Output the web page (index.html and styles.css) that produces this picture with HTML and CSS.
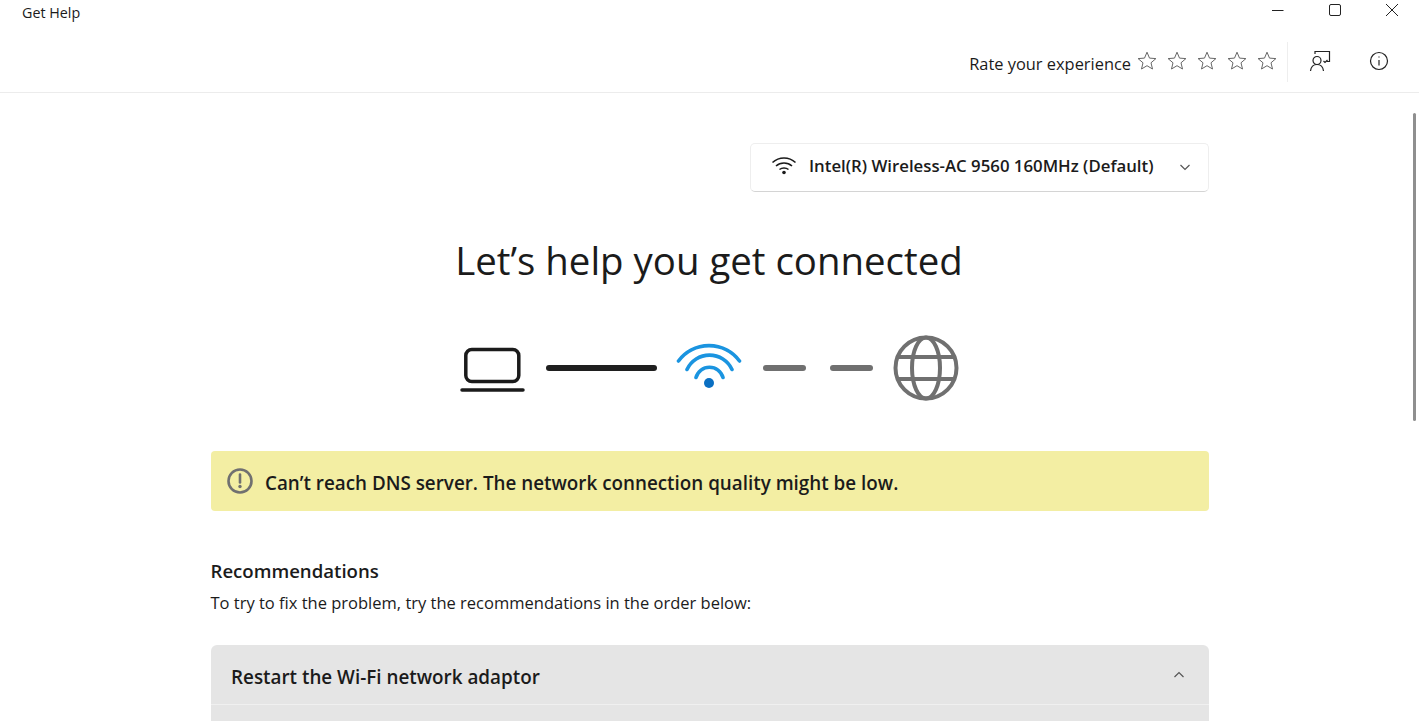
FILE: index.html
```html
<!DOCTYPE html>
<html lang="en">
<head>
<meta charset="utf-8">
<title>Get Help</title>
<link rel="stylesheet" href="styles.css">
</head>
<body>
<div class="app">
  <header class="titlebar">
    <span class="app-name">Get Help</span>
    <div class="win-controls">
      <svg class="win-btn" width="14" height="14" viewBox="0 0 14 14"><path d="M1 7.500h11.500" /></svg>
      <svg class="win-btn" width="14" height="14" viewBox="0 0 14 14"><rect x="1.500" y="1.500" width="11" height="11" rx="1.500"/></svg>
      <svg class="win-btn" width="14" height="14" viewBox="0 0 14 14"><path d="M1 1l12 12M13 1L1 13"/></svg>
    </div>
  </header>
  <div class="commandbar">
    <span class="rate-label">Rate your experience</span>
    <div class="stars">
      <svg class="star" viewBox="0 0 20 20"><path d="M10 1.200l2.500 5.900 6.400.5-4.900 4.200 1.500 6.200L10 14.700 4.500 18l1.500-6.200L1.100 7.600l6.400-.5z"/></svg>
      <svg class="star" viewBox="0 0 20 20"><path d="M10 1.200l2.500 5.900 6.400.5-4.900 4.200 1.500 6.200L10 14.700 4.500 18l1.500-6.200L1.100 7.600l6.400-.5z"/></svg>
      <svg class="star" viewBox="0 0 20 20"><path d="M10 1.200l2.500 5.900 6.400.5-4.900 4.200 1.500 6.200L10 14.700 4.500 18l1.500-6.200L1.100 7.600l6.400-.5z"/></svg>
      <svg class="star" viewBox="0 0 20 20"><path d="M10 1.200l2.500 5.900 6.400.5-4.900 4.200 1.500 6.200L10 14.700 4.500 18l1.500-6.200L1.100 7.600l6.400-.5z"/></svg>
      <svg class="star" viewBox="0 0 20 20"><path d="M10 1.200l2.500 5.900 6.400.5-4.900 4.200 1.500 6.200L10 14.700 4.500 18l1.500-6.200L1.100 7.600l6.400-.5z"/></svg>
    </div>
    <div class="divider"></div>
    <svg class="cmd-icon feedback" viewBox="0 0 22 22"><path d="M6 4V1.500h14.500V11.500H17.500"/><path d="M14.500 11l1.500 1.500 2.500-2.500"/><circle cx="8" cy="10.500" r="4"/><path d="M1.500 21c.5-4 3-6.500 6.500-6.500s6 2.500 6.500 6.500"/></svg>
    <svg class="cmd-icon info" viewBox="0 0 20 20"><circle cx="10" cy="10" r="8.500"/><path d="M10 9v5.500"/><path d="M10 5.600v.8"/></svg>
  </div>
  <main class="content">
    <div class="column">
      <div class="device-row">
        <button class="device-select">
          <svg class="device-wifi" viewBox="0 0 26 20"><path d="M1.500 7.500c6.500-6 16.500-6 23 0M5 11c4.500-4 11.500-4 16 0M8.500 14.500c2.500-2 6.500-2 9 0"/><circle class="fill" cx="13" cy="17.500" r="1.800"/></svg>
          <span class="device-name">Intel(R) Wireless-AC 9560 160MHz (Default)</span>
          <svg class="chev down" viewBox="0 0 12 12"><path d="M1.500 4l4.500 4.500L10.500 4"/></svg>
        </button>
      </div>
      <h1 class="headline">Let’s help you get connected</h1>
      <div class="diagram">
        <svg class="laptop" viewBox="0 0 66 46"><rect x="5.800" y="2.500" width="53" height="32" rx="6"/><path d="M2 43h61"/></svg>
        <div class="link solid"></div>
        <svg class="wifi" viewBox="0 0 66 50"><path d="M2.500 18A38 38 0 0 1 63.500 18M11 26.500A24.800 24.800 0 0 1 56 26.500M20 34.500A14 14 0 0 1 47 34.500"/><circle cx="33" cy="40" r="5"/></svg>
        <div class="link dash first"></div>
        <div class="link dash second"></div>
        <svg class="globe" viewBox="0 0 66 66"><circle cx="33" cy="33" r="30.500"/><ellipse cx="33" cy="33" rx="14" ry="30.500"/><path d="M6 22h54M6 44h54"/></svg>
      </div>
      <div class="banner">
        <svg class="alert" viewBox="0 0 26 26"><circle cx="13" cy="13" r="11.500"/><path d="M13 6.500v8"/><circle class="fill" cx="13" cy="18.500" r="1.700"/></svg>
        <span class="banner-text">Can’t reach DNS server. The network connection quality might be low.</span>
      </div>
      <h2 class="rec-title">Recommendations</h2>
      <p class="rec-sub">To try to fix the problem, try the recommendations in the order below:</p>
      <section class="accordion">
        <div class="acc-head">
          <span class="acc-title">Restart the Wi-Fi network adaptor</span>
          <svg class="chev up" viewBox="0 0 12 12"><path d="M1.500 8L6 3.500 10.500 8"/></svg>
        </div>
        <div class="acc-body"></div>
      </section>
    </div>
  </main>
  <div class="scrollbar"></div>
</div>
</body>
</html>
```
FILE: styles.css
```css
* { box-sizing: border-box; }
html, body { margin: 0; height: 100%; overflow: hidden; background: #fff; }
body { font-family: "Open Sans", "Noto Sans", sans-serif; color: #1b1b1b; }
.app { position: relative; height: 721px; overflow: hidden; }

.titlebar { height: 32px; display: flex; justify-content: space-between; padding-left: 22px; }
.app-name { font-size: 14.300px; line-height: 26px; }
.win-controls { display: flex; gap: 43px; padding: 3px 20px 0 0; }
.win-btn { fill: none; stroke: #222; stroke-width: 1; }

.commandbar { height: 61px; display: flex; align-items: flex-start; justify-content: flex-end; border-bottom: 1px solid #ececec; padding-right: 30px; }
.rate-label { font-size: 16.400px; line-height: 24px; margin-top: 20px; }
.stars { display: flex; gap: 10px; margin: 19px 0 0 6px; }
.star { width: 20px; height: 20px; fill: none; stroke: #666; stroke-width: 1; }
.divider { width: 1px; height: 40px; background: #eee; margin: 10px 21px 0 10px; }
.cmd-icon { fill: none; stroke: #222; stroke-width: 1.200; }
.feedback { width: 22px; height: 22px; margin: 18px 38px 0 0; }
.info { width: 20px; height: 20px; margin-top: 19px; }

.content { display: flex; justify-content: center; }
.column { width: 998px; display: flex; flex-direction: column; margin-left: 1px; }

.device-row { display: flex; justify-content: flex-end; margin-top: 50px; }
.device-select { width: 459px; height: 49px; display: flex; align-items: center; padding: 0 17px 5px 20px; background: #fff; border: 1px solid #eeeeee; border-bottom-color: #d4d4d4; border-radius: 5px; font: inherit; color: inherit; }
.device-wifi { width: 26px; height: 20px; fill: none; stroke: #1b1b1b; stroke-width: 1.600; flex: none; }
.device-wifi .fill { fill: #1b1b1b; stroke: none; }
.device-name { font-size: 16.800px; font-weight: 600; margin-left: 12px; flex: 1; text-align: left; white-space: nowrap; }
.chev { width: 12px; height: 12px; fill: none; stroke: #555; stroke-width: 1.200; flex: none; }
.down { margin-top: 4px; }

.headline { margin: 39px 0 0; padding-right: 2px; text-align: center; font-size: 38.400px; font-weight: 400; line-height: 58px; }

.diagram { display: flex; align-items: center; justify-content: center; height: 66px; margin-top: 46px; padding-right: 1px; }
.laptop { width: 66px; height: 46px; margin-top: 4px; fill: none; stroke: #1b1b1b; stroke-width: 3.500; stroke-linecap: round; }
.link { height: 6px; border-radius: 3px; }
.solid { width: 111px; background: #1f1f1f; margin: 0 19px 0 20px; }
.wifi { width: 66px; height: 50px; fill: none; stroke: #1a94e0; stroke-width: 3.600; stroke-linecap: round; }
.wifi circle { fill: #0a6fc2; stroke: none; }
.dash { width: 43px; background: #707070; }
.first { margin-left: 21px; }
.second { margin: 0 20px 0 24px; }
.globe { width: 66px; height: 66px; fill: none; stroke: #707070; stroke-width: 4; }

.banner { margin-top: 50px; height: 60px; background: #f3eea3; border-radius: 4px; display: flex; align-items: center; padding-left: 16px; }
.alert { width: 26px; height: 26px; fill: none; stroke: #707070; stroke-width: 2.600; stroke-linecap: round; flex: none; }
.alert .fill { fill: #707070; stroke: none; }
.banner-text { font-size: 18.840px; font-weight: 600; margin-left: 12px; padding-top: 3px; white-space: nowrap; }

.rec-title { margin: 47px 0 0 -0.5px; font-size: 18.600px; font-weight: 600; line-height: 26px; }
.rec-sub { margin: 7px 0 0 -0.5px; font-size: 16.500px; line-height: 24px; }

.accordion { margin-top: 30px; border-radius: 6px 6px 0 0; overflow: hidden; background: #e5e5e5; }
.acc-head { height: 60px; display: flex; align-items: center; justify-content: space-between; padding: 0 24px 0 20px; border-bottom: 1px solid #f0f0f0; }
.acc-title { font-size: 18.850px; font-weight: 600; padding-top: 5px; }
.acc-body { height: 40px; }

.scrollbar { position: absolute; left: 1413px; top: 113px; width: 3px; height: 308px; background: #8f8f8f; border-radius: 2px; }
```
